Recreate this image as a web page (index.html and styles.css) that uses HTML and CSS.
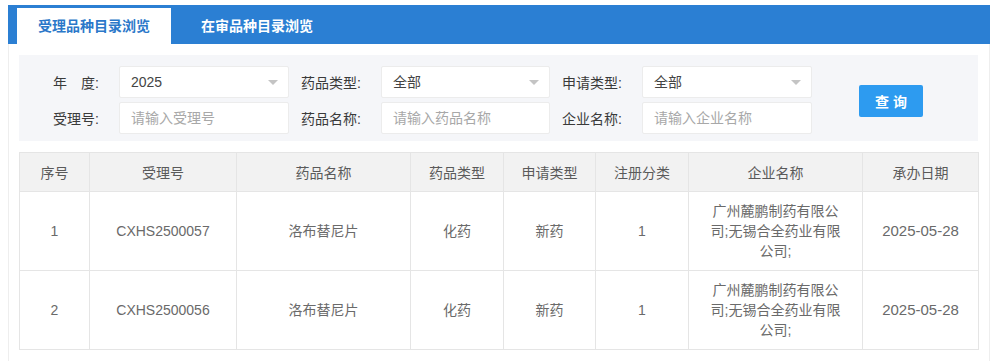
FILE: index.html
```html
<!DOCTYPE html>
<html lang="zh-CN">
<head>
<meta charset="utf-8">
<title>受理品种目录浏览</title>
<link rel="stylesheet" href="styles.css">
</head>
<body>
<div class="frame">
  <div class="tabbar">
    <div class="tab active">受理品种目录浏览</div>
    <div class="tab">在审品种目录浏览</div>
  </div>
  <div class="content">
    <div class="filters">
      <div class="label">年　度:</div>
      <div class="field select"><span class="val">2025</span><span class="arrow"></span></div>
      <div class="label pad">药品类型:</div>
      <div class="field select"><span class="val">全部</span><span class="arrow"></span></div>
      <div class="label pad">申请类型:</div>
      <div class="field select"><span class="val">全部</span><span class="arrow"></span></div>
      <div class="btn-cell"><button class="btn">查 询</button></div>
      <div class="label">受理号:</div>
      <div class="field"><span class="ph">请输入受理号</span></div>
      <div class="label pad">药品名称:</div>
      <div class="field"><span class="ph">请输入药品名称</span></div>
      <div class="label pad">企业名称:</div>
      <div class="field"><span class="ph">请输入企业名称</span></div>
    </div>
    <table class="grid">
      <colgroup>
        <col style="width:70px"><col style="width:147px"><col style="width:174px"><col style="width:93px">
        <col style="width:92px"><col style="width:93px"><col style="width:174px"><col style="width:116px">
      </colgroup>
      <thead>
        <tr><th>序号</th><th>受理号</th><th>药品名称</th><th>药品类型</th><th>申请类型</th><th>注册分类</th><th>企业名称</th><th>承办日期</th></tr>
      </thead>
      <tbody>
        <tr><td>1</td><td>CXHS2500057</td><td>洛布替尼片</td><td>化药</td><td>新药</td><td>1</td><td class="co">广州麓鹏制药有限公司;无锡合全药业有限公司;</td><td class="date">2025-05-28</td></tr>
        <tr><td>2</td><td>CXHS2500056</td><td>洛布替尼片</td><td>化药</td><td>新药</td><td>1</td><td class="co">广州麓鹏制药有限公司;无锡合全药业有限公司;</td><td class="date">2025-05-28</td></tr>
      </tbody>
    </table>
  </div>
</div>
</body>
</html>
```
FILE: styles.css
```css
html, body {
  margin: 0;
  padding: 0;
  background: #fff;
  font-family: "Liberation Sans", "Noto Sans CJK SC", sans-serif;
  font-size: 14px;
  color: #333;
}
.frame {
  margin: 5px 0 0 8px;
  width: 980px;
  height: 356px;
  border-left: 1px solid #eeeeee;
  border-right: 1px solid #eeeeee;
}
.tabbar {
  display: flex;
  align-items: flex-end;
  height: 39px;
  margin: 0 -1px 0 -1px;
  background: #2b7fd3;
  padding-left: 9px;
}
.tab {
  height: 36px;
  line-height: 36px;
  padding: 0 21px;
  font-weight: bold;
  color: #fff;
  white-space: nowrap;
}
.tab.active {
  background: #fff;
  color: #2b78c9;
}
.tab + .tab {
  margin-left: 9px;
}
.content {
  padding: 11px 11px 0 10px;
}
.filters {
  display: grid;
  grid-template-columns: 66px 170px 92px 169px 92px 170px 111px;
  grid-template-rows: 32px 32px;
  row-gap: 4px;
  background: #f5f6f9;
  padding: 11px 0 7px 34px;
  align-items: center;
}
.label {
  color: #3a3a3a;
  white-space: nowrap;
}
.label.pad {
  padding-left: 12px;
}
.field {
  position: relative;
  height: 32px;
  box-sizing: border-box;
  background: #fff;
  border: 1px solid #ececec;
  border-radius: 2px;
  padding: 0 11px;
  line-height: 30px;
}
.val { color: #444; }
.ph { color: #a8a8a8; }
.arrow {
  position: absolute;
  right: 10px;
  top: 13px;
  width: 0;
  height: 0;
  border-left: 5px solid transparent;
  border-right: 5px solid transparent;
  border-top: 5px solid #c4c4c4;
}
.btn-cell {
  grid-column: 7;
  grid-row: 1 / span 2;
  display: flex;
  justify-content: flex-end;
  align-items: center;
  padding-top: 1px;
}
.btn {
  width: 64px;
  height: 32px;
  border: none;
  border-radius: 2px;
  background: #2d9bf0;
  color: #fff;
  font-family: inherit;
  font-size: 14px;
  font-weight: bold;
  padding: 0;
}
.grid {
  margin-top: 11px;
  width: 959px;
  border-collapse: collapse;
  table-layout: fixed;
}
.grid th, .grid td {
  border: 1px solid #e5e5e5;
  text-align: center;
  vertical-align: middle;
  padding: 0;
}
.grid th {
  height: 38px;
  background: #f2f2f2;
  font-weight: normal;
  color: #5a5a5a;
}
.grid td {
  height: 78px;
  color: #6a6a6a;
  line-height: 20px;
}
.grid td.co {
  padding: 0 20px;
}
.grid td.date {
  font-size: 15px;
}
```
